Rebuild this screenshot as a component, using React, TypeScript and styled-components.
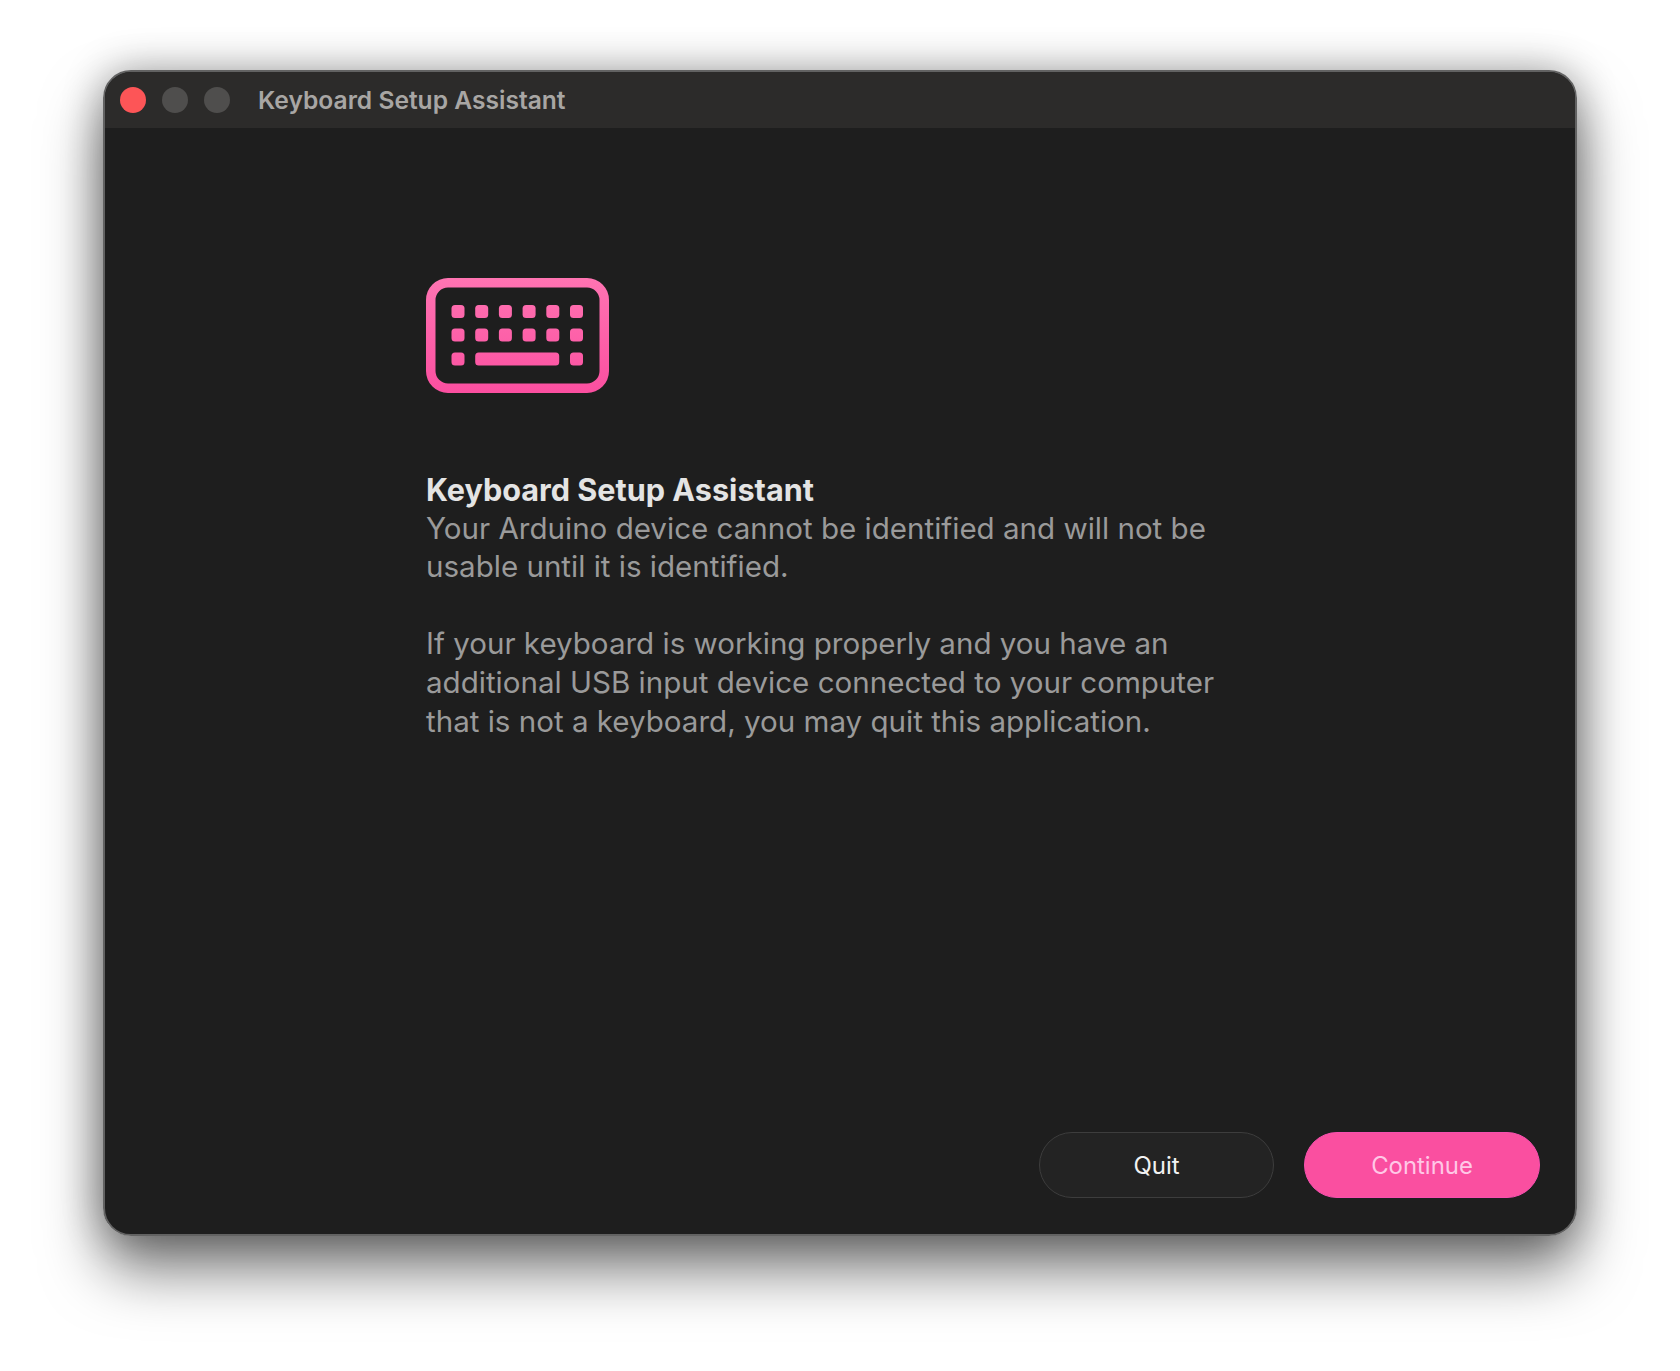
import * as React from 'react';
import styled, { createGlobalStyle } from 'styled-components';

const Global = createGlobalStyle`
  html, body {
    margin: 0;
    padding: 0;
    background: #fff;
    overflow: hidden;
  }
  * { box-sizing: border-box; }
`;

const Page = styled.div`
  width: 1680px;
  height: 1371px;
  padding: 70px 103px 135px;
  font-family: Inter, "Liberation Sans", sans-serif;
`;

const Shadow = styled.div`
  height: 100%;
  border-radius: 28px;
  box-shadow: 0 34px 60px rgba(0, 0, 0, 0.52), 0 0 40px rgba(0, 0, 0, 0.32);
`;

const Window = styled.div`
  height: 100%;
  display: flex;
  flex-direction: column;
  background: #1e1e1e;
  border-radius: 28px;
  border: 2px solid #626262;
  overflow: hidden;
`;

const TitleBar = styled.div`
  height: 56px;
  flex: none;
  display: flex;
  align-items: center;
  padding-left: 15px;
  background: #2c2b2a;
`;

const Light = styled.span<{ $color: string }>`
  width: 26px;
  height: 26px;
  border-radius: 50%;
  margin-right: 16px;
  background: ${p => p.$color};
`;

const WindowTitle = styled.div`
  margin-left: 12px;
  font-size: 24.6px;
  font-weight: 600;
  color: #a8a6a4;
  line-height: 1;
`;

const Content = styled.div`
  flex: 1;
  display: flex;
  flex-direction: column;
  padding: 150px 35px 36px 321px;
`;

const Icon = styled.svg`
  display: block;
  width: 183px;
  height: 115px;
  flex: none;
`;

const Heading = styled.h1`
  margin: 78px 0 0;
  font-size: 30.6px;
  line-height: 38.6px;
  font-weight: 700;
  color: #e4e4e4;
`;

const Body = styled.p`
  margin: 0 0 38.6px;
  width: 820px;
  font-size: 29.55px;
  line-height: 38.6px;
  font-weight: 400;
  color: #9a9a9a;
  position: relative;
  top: -1px;
`;

const Footer = styled.div`
  margin-top: auto;
  display: flex;
  justify-content: flex-end;
  gap: 30px;
`;

const Button = styled.button<{ $primary?: boolean }>`
  width: ${p => (p.$primary ? 236 : 235)}px;
  height: 66px;
  border-radius: 33px;
  font-family: inherit;
  font-size: ${p => (p.$primary ? 23.9 : 24)}px;
  font-weight: 400;
  cursor: pointer;
  border: 1.5px solid ${p => (p.$primary ? '#f84fb0' : '#3d3d3d')};
  background: ${p => (p.$primary ? '#fa4fa0' : '#232323')};
  color: ${p => (p.$primary ? '#ffc8e6' : '#f2f2f2')};
`;

const keyXs = [0, 1, 2, 3, 4, 5].map(i => 25.5 + i * 23.7);

const KeyboardIcon = () => (
  <Icon viewBox="0 0 183 115">
    <defs>
      <linearGradient id="kb" x1="0" y1="0" x2="0" y2="115" gradientUnits="userSpaceOnUse">
        <stop offset="0" stopColor="#ff74b2" />
        <stop offset="1" stopColor="#fb4fa0" />
      </linearGradient>
    </defs>
    <g fill="url(#kb)">
      <path
        fillRule="evenodd"
        d="M22 0H161A22 22 0 0 1 183 22V93A22 22 0 0 1 161 115H22A22 22 0 0 1 0 93V22A22 22 0 0 1 22 0ZM22 9.500A12.500 12.500 0 0 0 9.500 22V93A12.500 12.500 0 0 0 22 105.500H161A12.500 12.500 0 0 0 173.500 93V22A12.500 12.500 0 0 0 161 9.500Z"
      />
      {keyXs.map(x => (
        <rect key={`a${x}`} x={x} y={27} width={13} height={13} rx={3.5} />
      ))}
      {keyXs.map(x => (
        <rect key={`b${x}`} x={x} y={50.500} width={13} height={13} rx={3.5} />
      ))}
      <rect x={keyXs[0]} y={74.500} width={13} height={13} rx={3.500} />
      <rect x={keyXs[1]} y={74.500} width={84} height={13} rx={3.500} />
      <rect x={keyXs[5]} y={74.500} width={13} height={13} rx={3.500} />
    </g>
  </Icon>
);

export default function App() {
  return (
    <Page>
      <Global />
      <Shadow>
        <Window>
          <TitleBar>
            <Light $color="#fd5557" />
            <Light $color="#4f4e4d" />
            <Light $color="#4f4e4d" />
            <WindowTitle>Keyboard Setup Assistant</WindowTitle>
          </TitleBar>
          <Content>
            <KeyboardIcon />
            <Heading>Keyboard Setup Assistant</Heading>
            <Body>
              Your Arduino device cannot be identified and will not be usable until it is
              identified.
            </Body>
            <Body>
              If your keyboard is working properly and you have an additional USB input device
              connected to your computer that is not a keyboard, you may quit this application.
            </Body>
            <Footer>
              <Button>Quit</Button>
              <Button $primary>Continue</Button>
            </Footer>
          </Content>
        </Window>
      </Shadow>
    </Page>
  );
}
